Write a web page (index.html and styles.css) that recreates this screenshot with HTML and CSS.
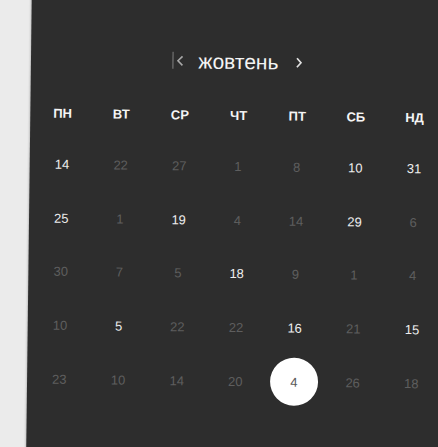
FILE: index.html
```html
<!DOCTYPE html>
<html lang="uk">
<head>
    <meta charset="UTF-8">
    <meta name="viewport" content="width=device-width, initial-scale=1.0">
    <title>Календар</title>
    <link rel="stylesheet" href="styles.css">
</head>
<body>
    <div class="card">
        <div class="month-bar">
            <span class="nav nav-first">
                <svg width="12" height="18" viewBox="0 0 12 18">
                    <line x1="1" y1="0.5" x2="1" y2="17.5" stroke="#6a6a6a" stroke-width="1.4"/>
                    <polyline points="10.5,5 6,9.5 10.5,14" fill="none" stroke="#a8a8a8" stroke-width="1.6"/>
                </svg>
            </span>
            <span class="month-name">жовтень</span>
            <span class="nav nav-next">
                <svg width="8" height="12" viewBox="0 0 8 12">
                    <polyline points="2,1.5 6,6 2,10.5" fill="none" stroke="#e0e0e0" stroke-width="1.7"/>
                </svg>
            </span>
        </div>

        <div class="week-head">
            <span>пн</span><span>вт</span><span>ср</span><span>чт</span><span>пт</span><span>сб</span><span>нд</span>
        </div>

        <div class="days">
            <span class="on">14</span><span>22</span><span>27</span><span>1</span><span>8</span><span class="on">10</span><span class="on">31</span>
            <span class="on">25</span><span>1</span><span class="on">19</span><span>4</span><span>14</span><span class="on">29</span><span>6</span>
            <span>30</span><span>7</span><span>5</span><span class="on">18</span><span>9</span><span>1</span><span>4</span>
            <span>10</span><span class="on">5</span><span>22</span><span>22</span><span class="on">16</span><span>21</span><span class="on">15</span>
            <span>23</span><span>10</span><span>14</span><span>20</span><span class="picked"><b>4</b></span><span>26</span><span>18</span>
        </div>
    </div>
</body>
</html>
```

FILE: styles.css
```css
html, body {
    margin: 0;
    height: 100%;
    overflow: hidden;
    background-color: #ebebeb;
}
body {
    font-family: "Liberation Sans", Arial, sans-serif;
}
.card {
    box-sizing: border-box;
    width: 440px;
    height: 500px;
    margin-top: -20px;
    margin-left: 29px;
    padding-top: 62px;
    padding-left: 3px;
    background-color: #2d2d2d;
    box-shadow: -1px 0 2px rgba(0, 0, 0, 0.18);
    transform: rotate(0.7deg);
    transform-origin: 208px 243px;
}
.month-bar {
    width: 407px;
    height: 40px;
    margin-bottom: 8px;
    display: flex;
    justify-content: center;
    align-items: center;
}
.nav {
    display: flex;
    align-items: center;
}
.nav-first {
    margin-right: 14px;
    margin-top: -2px;
}
.nav-next {
    margin-left: 16px;
    margin-top: -1px;
}
.month-name {
    font-size: 21px;
    color: #f4f4f4;
}
.week-head,
.days {
    display: grid;
    grid-template-columns: repeat(7, 58.67px);
}
.week-head span {
    height: 50px;
    display: flex;
    justify-content: center;
    align-items: center;
    font-size: 13px;
    font-weight: bold;
    text-transform: uppercase;
    color: #f5f5f5;
}
.days span {
    height: 53.6px;
    display: flex;
    justify-content: center;
    align-items: center;
    font-size: 13px;
    color: #5e5e5e;
}
.days .on {
    color: #ececec;
}
.days .picked b {
    width: 48px;
    height: 48px;
    border-radius: 50%;
    background-color: #fff;
    display: flex;
    justify-content: center;
    align-items: center;
    font-weight: normal;
    color: #5a5a5a;
    font-size: 13px;
}
```
